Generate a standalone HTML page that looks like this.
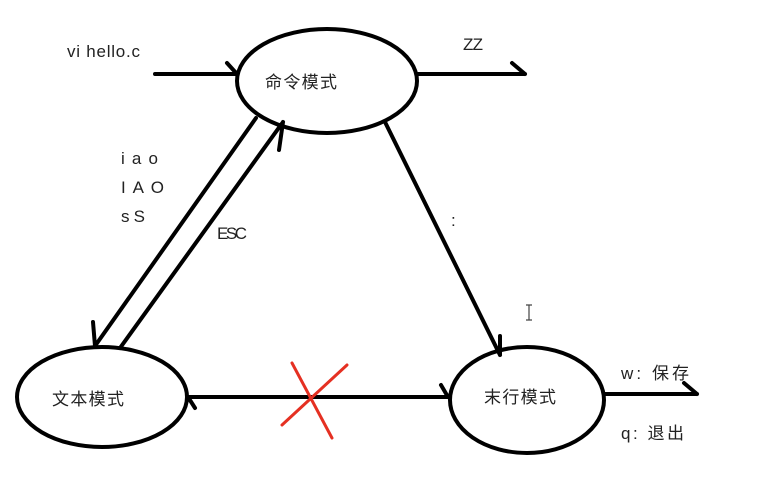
<!DOCTYPE html>
<html><head><meta charset="utf-8"><style>
body{margin:0;background:#fff;}
svg text{font-family:"Liberation Sans","Noto Sans CJK SC",sans-serif;font-size:17px;fill:#222;}
</style></head><body>
<svg width="781" height="485" viewBox="0 0 781 485" xmlns="http://www.w3.org/2000/svg">
<g fill="none" stroke="#000" stroke-width="4" stroke-linecap="round" stroke-linejoin="round">
<ellipse cx="327" cy="81" rx="90" ry="52"/>
<ellipse cx="102" cy="397" rx="85" ry="50"/>
<ellipse cx="527" cy="400" rx="77" ry="53"/>
<path d="M155 74 L237 74 M227 63 L237 74"/>
<path d="M418 74 L525 74 M512 63 L525 74"/>
<path d="M256 118 L95 346 M93 322 L95 346"/>
<path d="M120 348 L283 122 M279 150 L283 122"/>
<path d="M385 122 L500 355 M500 336 L500 355"/>
<path d="M188 397 L448 397 M195 408 L188 397 M441 385 L448 397"/>
<path d="M605 394 L697 394 M684 383 L697 394"/>
</g>
<g stroke="#e53022" stroke-width="3" stroke-linecap="round" fill="none">
<path d="M292 363 L332 438 M347 365 L282 425"/>
</g>
<path d="M529 305 L529 320 M526 305 L532 305 M526 320 L532 320" stroke="#444" stroke-width="1.2"/>
<text x="67" y="57" textLength="73">vi hello.c</text>
<text x="463" y="50" textLength="20">ZZ</text>
<text x="265" y="88" textLength="72">命令模式</text>
<text x="121" y="164" textLength="37">i a o</text>
<text x="121" y="193" textLength="43">I A O</text>
<text x="121" y="222" textLength="24">s S</text>
<text x="217" y="239" textLength="30">ESC</text>
<text x="451" y="226">:</text>
<text x="52" y="405" textLength="72">文本模式</text>
<text x="484" y="403" textLength="72">末行模式</text>
<text x="621" y="379" textLength="68">w: 保存</text>
<text x="621" y="439" textLength="63">q: 退出</text>
</svg>
</body></html>
